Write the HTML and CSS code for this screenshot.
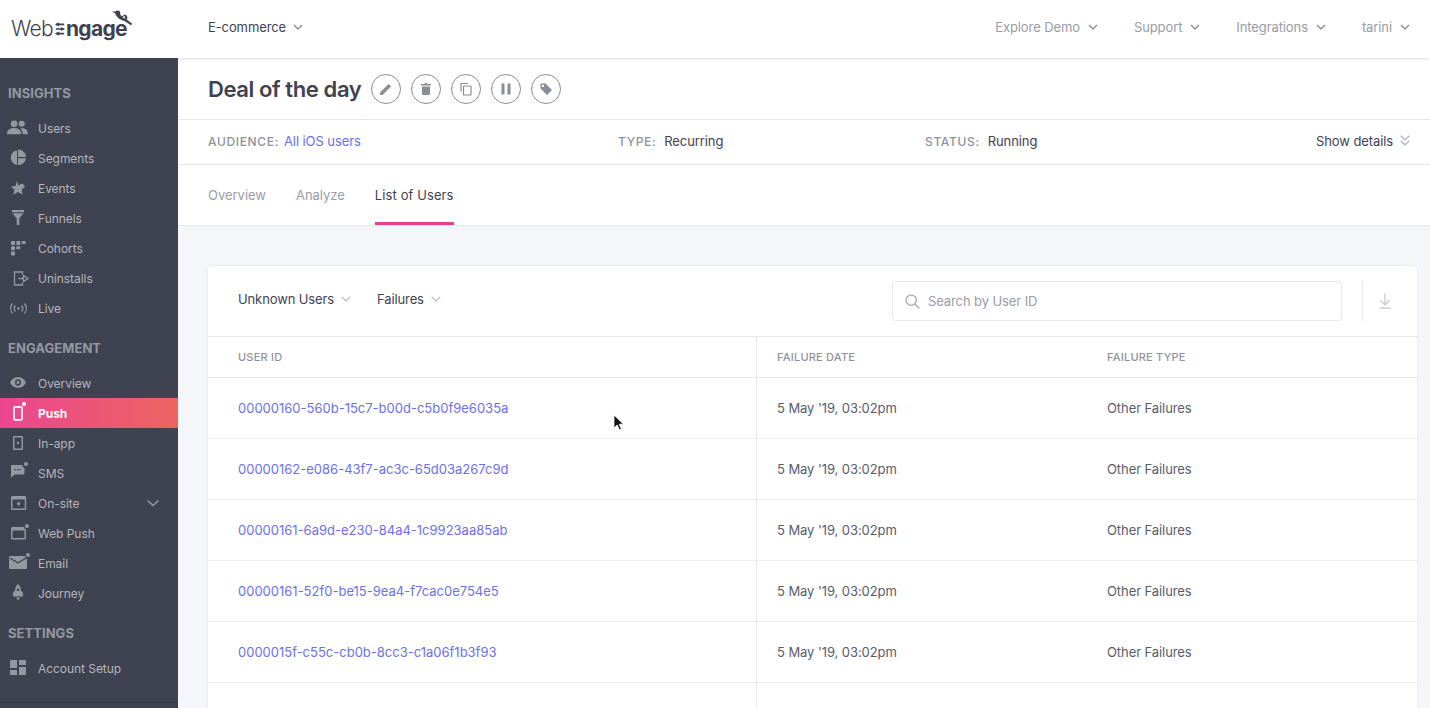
FILE: index.html
```html
<!DOCTYPE html>
<html lang="en">
<head>
<meta charset="utf-8">
<title>WebEngage</title>
<link rel="stylesheet" href="styles.css">
</head>
<body>
<header class="topbar">
  <div class="logo">
    <span class="logo-web">Web</span><svg class="logo-e" viewBox="0 0 12 16"><path d="M1 2.500h10M1 8h10M1 13.500h10" stroke="#3f4250" stroke-width="2" fill="none"/><path d="M5 0 0 2.500 5 5zM7 5.500 12 8 7 10.500zM5 11 0 13.500 5 16z" fill="#3f4250"/></svg><span class="logo-engage">ngage</span>
    <svg class="logo-bird" viewBox="0 0 22 18"><circle cx="6" cy="2.600" r="2.600" fill="#3f4250"/><path d="M0 1.300 5 .8v3zM3.600 3C4.500 7 8 10 13 11l7 4.500 1.200-1.500-5.700-4.500C17 7 15.500 4 13 4.500c-1.500.5-2 1.500-2.500 2C9 5.500 8.500 4 8.500 2z" fill="#3f4250"/><circle cx="12.700" cy="7.200" r="1.200" fill="#fff"/></svg>
  </div>
  <button class="project">E-commerce<svg class="chev" viewBox="0 0 10 6"><path d="M1 1l4 4 4-4"/></svg></button>
  <nav class="topnav">
    <a>Explore Demo<svg class="chev" viewBox="0 0 10 6"><path d="M1 1l4 4 4-4"/></svg></a>
    <a>Support<svg class="chev" viewBox="0 0 10 6"><path d="M1 1l4 4 4-4"/></svg></a>
    <a>Integrations<svg class="chev" viewBox="0 0 10 6"><path d="M1 1l4 4 4-4"/></svg></a>
    <a>tarini<svg class="chev" viewBox="0 0 10 6"><path d="M1 1l4 4 4-4"/></svg></a>
  </nav>
</header>
<div class="shell">
  <aside class="sidebar">
    <section class="side-section">
      <h4>INSIGHTS</h4>
      <a class="side-item"><svg viewBox="0 0 24 18"><g transform="translate(1 1) scale(.95)"><circle cx="7.500" cy="4" r="3.500"/><circle cx="15.500" cy="4" r="3.200"/><path d="M0 14.500C0 10.500 3.500 8.500 7.500 8.500s7.500 2 7.500 6v.5H0zM16.500 15v-.5c0-2-1-4-2.500-5.500 4-.8 8 1 8 5.500v.5z"/></g></svg><span>Users</span></a>
      <a class="side-item"><svg viewBox="0 0 24 18"><g transform="translate(5 0)"><path d="M7 .8V8h8V7.500A7.500 7.500 0 0 0 8 .6zM6 1.200A7.500 7.500 0 0 0 6 16zM7 9.200V16a7.500 7.500 0 0 0 8-6.800z"/></g></svg><span>Segments</span></a>
      <a class="side-item"><svg viewBox="0 0 24 18"><g transform="translate(5 2) scale(.92)"><path d="M6.500 0 8 4.500h1.200a2.700 2.700 0 0 1 5 .5L15.500 6 11.500 9.500l1.200 5.500L7.500 12 2.500 15l1.200-5.500L0 6l5-.5z"/></g></svg><span>Events</span></a>
      <a class="side-item"><svg viewBox="0 0 24 18"><g transform="translate(6 1) scale(.86 1)"><path d="M0 0h14v2.200H0zM.5 3.200h13L8.500 8.500V15h-3V8.500z"/></g></svg><span>Funnels</span></a>
      <a class="side-item"><svg viewBox="0 0 24 18"><g transform="translate(5 2)"><rect width="4" height="4" rx=".8"/><rect x="5.300" width="4" height="4" rx=".8"/><rect x="10.600" width="4" height="3" rx=".8"/><rect y="5.300" width="4" height="4" rx=".8"/><rect x="5.300" y="5.300" width="4" height="3" rx=".8"/><rect y="10.600" width="4" height="4" rx=".8"/></g></svg><span>Cohorts</span></a>
      <a class="side-item"><svg class="line" viewBox="0 0 24 18"><g transform="translate(7 2)"><path d="M9.500 3.500V1H1.500v13h8v-2.500M5.500 7.500h5V4.500L15 7.500l-4.500 3V7.500"/></g></svg><span>Uninstalls</span></a>
      <a class="side-item"><svg class="line" viewBox="0 0 24 18"><g transform="translate(3 3.500)"><circle class="dot" cx="9.500" cy="6" r="1.300"/><path d="M6.500 3a4 4 0 0 0 0 6M12.500 3a4 4 0 0 1 0 6M3.500 1a8 8 0 0 0 0 10M15.500 1a8 8 0 0 1 0 10"/></g></svg><span>Live</span></a>
    </section>
    <section class="side-section">
      <h4>ENGAGEMENT</h4>
      <a class="side-item"><svg viewBox="0 0 24 18"><g transform="translate(4 3) scale(1 1.100)"><path fill-rule="evenodd" d="M8 0c3.500 0 6.500 2 8 5-1.500 3-4.500 5-8 5S1.500 8 0 5c1.500-3 4.500-5 8-5zm0 2a3 3 0 1 0 0 6 3 3 0 0 0 0-6zm0 1.500a1.500 1.500 0 1 1 0 3 1.500 1.500 0 0 1 0-3z"/></g></svg><span>Overview</span></a>
      <a class="side-item active"><svg class="phone" viewBox="0 0 24 18"><rect x="8" y="2.800" width="8" height="13" rx="1"/><circle class="dot" cx="18" cy="0" r="2"/></svg><span>Push</span></a>
      <a class="side-item"><svg viewBox="0 0 24 18"><g transform="translate(7 2)"><path fill-rule="evenodd" d="M1 0h8a1 1 0 0 1 1 1v12a1 1 0 0 1-1 1H1a1 1 0 0 1-1-1V1a1 1 0 0 1 1-1zm.500 1.500v11h7v-11zM5 5.800a1.200 1.200 0 1 1 0 2.400 1.200 1.200 0 0 1 0-2.400z"/></g></svg><span>In-app</span></a>
      <a class="side-item"><svg viewBox="0 0 24 18"><g transform="translate(4 -2)"><path fill-rule="evenodd" d="M2 3h10.500a2.600 2.600 0 0 0 2 3V11a1.500 1.500 0 0 1-1.500 1.500H5L1 15.500V4a1 1 0 0 1 1-1zM4.500 7v1.300h1.500V7zm2.500 0v1.300h1.500V7zm2.500 0v1.300H11V7z"/><circle cx="16" cy="2" r="2"/></g></svg><span>SMS</span></a>
      <a class="side-item has-caret"><svg viewBox="0 0 24 18"><g transform="translate(5 2) scale(.95 1)"><path fill-rule="evenodd" d="M1.500 0h13A1.500 1.500 0 0 1 16 1.500v11a1.500 1.500 0 0 1-1.500 1.500h-13A1.500 1.500 0 0 1 0 12.500v-11A1.500 1.500 0 0 1 1.500 0zm0 3.500v9h13v-9zM8 6a1.700 1.700 0 1 1 0 3.400A1.700 1.700 0 0 1 8 6z"/></g></svg><span>On-site</span><svg class="caret" viewBox="0 0 14 8"><path d="M1.500 1.500 7 6.500l5.500-5"/></svg></a>
      <a class="side-item"><svg viewBox="0 0 24 18"><g transform="translate(5 0)"><path fill-rule="evenodd" d="M1.500 3h11.700a2.600 2.600 0 0 0 1.800 2.800V14a1.500 1.500 0 0 1-1.500 1.500H1.500A1.500 1.500 0 0 1 0 14V4.500A1.500 1.500 0 0 1 1.500 3zm0 3.500V14h12V6.500z"/><circle cx="16" cy="2" r="2"/></g></svg><span>Web Push</span></a>
      <a class="side-item"><svg viewBox="0 0 24 18"><g transform="translate(3 -1)"><path d="M1 3h15.200a2.800 2.800 0 0 0 1.800 3V15a1 1 0 0 1-1 1H1a1 1 0 0 1-1-1V4a1 1 0 0 1 1-1z"/><path class="cut" d="M.8 5 9 9.700 17.200 5"/><circle cx="19" cy="2" r="2"/></g></svg><span>Email</span></a>
      <a class="side-item"><svg viewBox="0 0 24 18"><g transform="translate(6 0)"><path fill-rule="evenodd" d="M6 0c1.800 1.500 2.800 3.500 2.800 6l2.200 3v3.500H1V9l2.200-3C3.200 3.500 4.200 1.500 6 0zm0 4.500a1.300 1.300 0 1 0 0 2.600 1.300 1.300 0 0 0 0-2.600zM4 13.500h4L6 16.500z"/></g></svg><span>Journey</span></a>
    </section>
    <section class="side-section">
      <h4>SETTINGS</h4>
      <a class="side-item"><svg viewBox="0 0 24 18"><g transform="translate(4 1)"><path d="M0 1a1 1 0 0 1 1-1h6v8H0zM9 0h6a1 1 0 0 1 1 1v4H9zM9 7h7v7a1 1 0 0 1-1 1H9zM0 10h7v5H1a1 1 0 0 1-1-1z"/></g></svg><span>Account Setup</span></a>
    </section>
  </aside>
  <main class="main">
    <div class="title-row">
      <h1>Deal of the day</h1>
      <button class="round"><svg viewBox="0 0 14 14"><path d="M1 10.500 9.500 2l2.500 2.500L3.500 13H1z"/></svg></button>
      <button class="round"><svg viewBox="0 0 14 14"><path d="M2 2h3.500l.5-1h2l.5 1H12v1.500H2zM3 4.500h8V12a1 1 0 0 1-1 1H4a1 1 0 0 1-1-1z"/></svg></button>
      <button class="round"><svg class="outline" viewBox="0 0 14 14"><path d="M2 9.500V1.500h7"/><rect x="4.500" y="4" width="7.500" height="9" rx=".6"/></svg></button>
      <button class="round"><svg viewBox="0 0 14 14"><rect x="2.500" y="1.500" width="3" height="11"/><rect x="8.500" y="1.500" width="3" height="11"/></svg></button>
      <button class="round"><svg viewBox="0 0 14 14"><path fill-rule="evenodd" d="M1.500 1.500h5l6.500 6.500-5 5-6.500-6.500zm2.500 1.200a1.200 1.200 0 1 0 0 2.400 1.200 1.200 0 0 0 0-2.400z"/></svg></button>
    </div>
    <div class="meta-row">
      <div class="meta meta-a"><b>AUDIENCE:</b><a class="link">All iOS users</a></div>
      <div class="meta meta-b"><b>TYPE:</b><span>Recurring</span></div>
      <div class="meta meta-c"><b>STATUS:</b><span>Running</span></div>
      <div class="details">Show details<svg viewBox="0 0 10 11"><path d="M.7 .8 5 4.800 9.300 .8M.7 5.800 5 9.800l4.300-4"/></svg></div>
    </div>
    <div class="tabs">
      <a class="tab">Overview</a>
      <a class="tab">Analyze</a>
      <a class="tab current">List of Users</a>
    </div>
    <div class="content">
      <div class="card">
        <div class="toolbar">
          <div class="filter">Unknown Users<svg class="chev" viewBox="0 0 10 6"><path d="M.8 .8 5 5l4.200-4.200"/></svg></div>
          <div class="filter">Failures<svg class="chev" viewBox="0 0 10 6"><path d="M.8 .8 5 5l4.200-4.200"/></svg></div>
          <div class="search"><svg viewBox="0 0 14 14"><circle cx="5.800" cy="5.800" r="4.800"/><path d="M9.300 9.300 13.500 13.500"/></svg><span>Search by User ID</span></div>
          <div class="download"><svg viewBox="0 0 12 16"><path d="M6 .5v11M1.500 7.500 6 12l4.500-4.500M.5 15.200h11"/></svg></div>
        </div>
        <div class="row head"><div>USER ID</div><div>FAILURE DATE</div><div>FAILURE TYPE</div></div>
        <div class="row"><div><a class="link">00000160-560b-15c7-b00d-c5b0f9e6035a</a></div><div>5 May '19, 03:02pm</div><div>Other Failures</div></div>
        <div class="row"><div><a class="link">00000162-e086-43f7-ac3c-65d03a267c9d</a></div><div>5 May '19, 03:02pm</div><div>Other Failures</div></div>
        <div class="row"><div><a class="link">00000161-6a9d-e230-84a4-1c9923aa85ab</a></div><div>5 May '19, 03:02pm</div><div>Other Failures</div></div>
        <div class="row"><div><a class="link">00000161-52f0-be15-9ea4-f7cac0e754e5</a></div><div>5 May '19, 03:02pm</div><div>Other Failures</div></div>
        <div class="row"><div><a class="link">0000015f-c55c-cb0b-8cc3-c1a06f1b3f93</a></div><div>5 May '19, 03:02pm</div><div>Other Failures</div></div>
        <div class="row"><div></div><div></div><div></div></div>
      </div>
    </div>
  </main>
</div>
<svg class="cursor" viewBox="0 0 12 18"><path d="M1 1v13l3.200-3 2.200 5 2-.9-2.200-4.900H10.500z" fill="#111" stroke="#fff" stroke-width=".8"/></svg>
</body>
</html>
```
FILE: styles.css
```css
* { box-sizing: border-box; }
html, body { margin: 0; height: 708px; overflow: hidden; }
body { font-family: Inter, "Noto Sans", sans-serif; font-size: 13px; color: #3f4250; background: #fff; }
h1, h4 { margin: 0; }
a { color: inherit; text-decoration: none; }
button { font: inherit; background: none; border: 0; padding: 0; color: inherit; }

.topbar { position: relative; z-index: 3; display: flex; align-items: center; height: 58px; padding-bottom: 4px; background: #fff; box-shadow: 0 1px 3px rgba(63, 66, 80, .18); }
.logo { position: relative; display: flex; align-items: center; width: 208px; height: 54px; padding: 2px 0 0 11px; font-size: 21px; letter-spacing: -.7px; color: #3f4250; }
.logo-web { font-weight: 300; }
.logo-e { width: 10px; height: 14px; margin: 1px 1px 0 2px; }
.logo-engage { font-weight: 700; }
.logo-bird { position: absolute; left: 112px; top: 10px; width: 21px; height: 18px; }
.chev { width: 10px; height: 6px; margin-left: 8px; fill: none; stroke: #8a8c96; stroke-width: 1.400; }
.project { display: flex; align-items: center; font-size: 13px; color: #3f4250; letter-spacing: -.1px; }
.project .chev { margin-left: 7px; }
.topnav { display: flex; margin-left: auto; gap: 36px; padding-right: 20px; color: #9a9ca5; letter-spacing: -.1px; }
.topnav a { display: flex; align-items: center; }

.shell { display: flex; height: 650px; }
.sidebar { position: relative; width: 178px; flex: none; padding-top: 20px; background: #3f4250; }
.sidebar::after { content: ""; position: absolute; left: 0; right: 0; bottom: 5px; height: 1px; background: #363945; }
.side-section { margin-bottom: 10px; }
.side-section h4 { height: 30px; margin-bottom: 5px; padding-left: 8px; font-size: 13px; line-height: 30px; font-weight: 700; letter-spacing: .05px; color: #9597a1; }
.side-item { display: flex; align-items: center; height: 30px; color: #b4b6bd; letter-spacing: -.05px; font-size: 12px; }
.side-item > svg:first-child { width: 24px; height: 18px; margin: 0 8px 0 6px; fill: #9597a1; flex: none; overflow: visible; }
.side-item > svg.line { fill: none; stroke: #9597a1; stroke-width: 1.300; }
.side-item > svg.line .dot { fill: #9597a1; stroke: none; }
.side-item .cut { fill: none; stroke: #3f4250; stroke-width: 1.300; }
.side-item.active { background: linear-gradient(90deg, #ea4690, #ee6460); color: #fff; font-weight: 700; }
.side-item > svg.phone { fill: none; stroke: #fff; stroke-width: 1.700; }
.side-item > svg.phone .dot { fill: #fff; stroke: none; }
.has-caret .caret { width: 14px; height: 8px; margin-left: auto; margin-right: 18px; fill: none; stroke: #9597a1; stroke-width: 1.600; }

.main { flex: 1; min-width: 0; display: flex; flex-direction: column; background: #f5f6fa; }
.title-row { display: flex; align-items: center; gap: 10px; height: 62px; padding-left: 30px; background: #fff; border-bottom: 1px solid #e6e7ea; }
.title-row h1 { font-size: 22px; font-weight: 600; color: #3f4250; letter-spacing: -.4px; }
.round { display: flex; align-items: center; justify-content: center; width: 30px; height: 30px; border: 1px solid #8a8c96; border-radius: 50%; }
.round svg { width: 14px; height: 14px; fill: #8a8c96; }
.round svg.outline { fill: none; stroke: #8a8c96; stroke-width: 1.200; }

.meta-row { display: flex; align-items: center; height: 45px; padding: 0 20px 2px 30px; background: #fff; border-bottom: 1px solid #e6e7ea; }
.meta { display: flex; align-items: baseline; gap: 5px; letter-spacing: -.08px; }
.meta b { font-size: 12px; font-weight: 500; color: #8f919a; letter-spacing: .65px; }
.meta-a { width: 410px; }
.meta-b { width: 307px; gap: 8px; }
.meta-c { gap: 8px; }
.link { color: #6d70e8; }
.details { display: flex; align-items: center; margin-left: auto; margin-bottom: 1px; letter-spacing: -.1px; }
.details svg { width: 10px; height: 11px; margin-left: 7px; fill: none; stroke: #b4b6bd; stroke-width: 1.300; }

.tabs { display: flex; gap: 30px; height: 61px; padding-left: 30px; background: #fff; border-bottom: 1px solid #e6e7ea; }
.tab { display: flex; align-items: center; height: 60px; color: #9a9ca5; letter-spacing: -.02px; }
.tab.current { color: #3f4250; border-bottom: 3px solid #ea3e8e; padding-top: 3px; letter-spacing: .1px; }

.content { flex: 1; padding: 40px 13px 0 30px; overflow: hidden; }
.card { background: #fff; border-radius: 4px 4px 0 0; box-shadow: 0 0 3px rgba(63, 66, 80, .1); }
.toolbar { display: flex; align-items: center; height: 71px; padding-right: 26px; padding-bottom: 2px; border-bottom: 1px solid #e6e7ea; }
.filter { display: flex; align-items: center; margin-left: 30px; margin-bottom: 2px; color: #3f4250; letter-spacing: -.12px; }
.filter + .filter { margin-left: 26px; }
.filter .chev { margin-left: 7px; stroke: #b4b6bd; stroke-width: 1.200; }
.search { display: flex; align-items: center; width: 450px; height: 40px; margin-left: auto; margin-top: 2px; padding-left: 12px; border: 1px solid #e6e7ea; border-radius: 4px; color: #9a9ca5; letter-spacing: -.1px; }
.search svg { width: 15px; height: 15px; margin-right: 8px; fill: none; stroke: #a8aab2; stroke-width: 1.300; }
.download { display: flex; align-items: center; height: 40px; margin-left: 20px; margin-top: 2px; padding-left: 16px; border-left: 1px solid #e6e7ea; }
.download svg { width: 12px; height: 16px; fill: none; stroke: #c3c5cb; stroke-width: 1.200; }

.row { display: grid; grid-template-columns: 549px 350px 1fr; height: 61px; border-bottom: 1px solid #ededf0; color: #5a5c69; letter-spacing: -.08px; }
.row .link { letter-spacing: 0; }
.row > div { display: flex; align-items: center; }
.row > div:nth-child(1) { padding-left: 30px; border-right: 1px solid #e6e7ea; }
.row > div:nth-child(2) { padding-left: 20px; }
.row.head { height: 41px; border-bottom-color: #e6e7ea; font-size: 11px; font-weight: 500; letter-spacing: .22px; color: #8f919a; }

.cursor { position: absolute; left: 613px; top: 414px; width: 12px; height: 18px; z-index: 5; }
```
